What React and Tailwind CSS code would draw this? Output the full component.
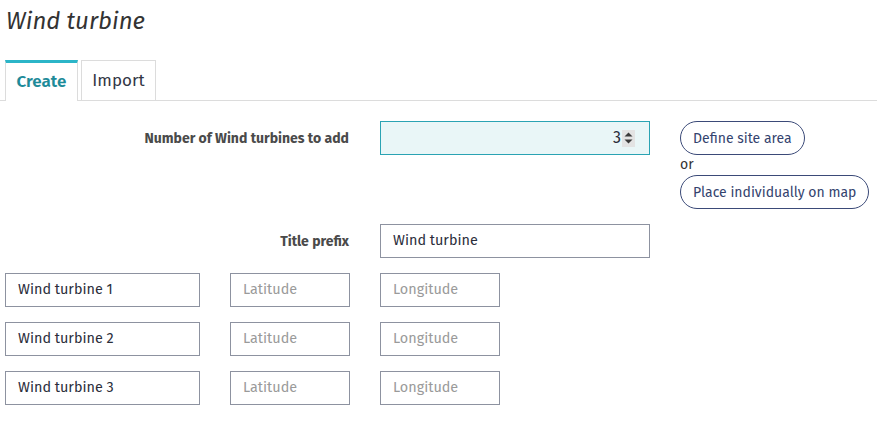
import React from 'react';

const FONT = { fontFamily: '"Fira Sans", "Open Sans", "Noto Sans", sans-serif' };

const Spinner = () => (
  <div className="flex flex-col items-center justify-center w-[13px] h-[17px] bg-[#e3e3e3] ml-[1px]">
    <svg width="9" height="5" viewBox="0 0 9 5"><path d="M0.5 4.5 L4.5 0.5 L8.5 4.5 Z" fill="#3a3a3a" /></svg>
    <svg width="9" height="5" viewBox="0 0 9 5" className="mt-[2px]"><path d="M0.5 0.5 L4.5 4.5 L8.5 0.5 Z" fill="#3a3a3a" /></svg>
  </div>
);

const Field = ({ value, placeholder, width }) => (
  <div className={`h-[34px] ${width} border border-[#8d92a0] flex items-center px-[12px] text-[14.4px]`}>
    {value ? <span className="text-[#2b2e3b]">{value}</span> : <span className="text-[#9a9a9a]">{placeholder}</span>}
  </div>
);

export default function App() {
  const turbines = ['Wind turbine 1', 'Wind turbine 2', 'Wind turbine 3'];
  return (
    <div className="w-[877px] h-[430px] bg-white overflow-hidden" style={FONT}>
      <h1 className="pl-[6px] pt-[6px] text-[24px] italic text-[#333] leading-[30px]">Wind turbine</h1>

      {/* Tabs */}
      <div className="mt-[24px] flex items-end border-b border-[#dcdcdc] pl-[5px] h-[41px]">
        <div className="w-[73px] h-[41px] border-t-[3px] border-t-[#2bb5c8] border-x border-x-[#dcdcdc] bg-white -mb-px flex items-center justify-center text-[17px] font-semibold text-[#1e8b99]">
          Create
        </div>
        <div className="ml-[3px] w-[75px] h-[40px] border border-[#dcdcdc] border-b-0 flex items-center justify-center text-[17px] text-[#333745]">
          Import
        </div>
      </div>

      {/* Number row */}
      <div className="mt-[20px] flex items-start">
        <label className="w-[349px] text-right text-[14px] font-bold text-[#4a4a4a] pt-[7px]">Number of Wind turbines to add</label>
        <div className="ml-[31px] w-[270px] h-[34px] bg-[#e9f6f7] border border-[#2aa3b3] flex items-center justify-end pr-[14px] text-[16px] text-[#2b2e3b]">
          3<Spinner />
        </div>
        <div className="ml-[30px] flex flex-col items-start">
          <button className="h-[34px] px-[12px] rounded-full border border-[#3b4a78] text-[14px] text-[#34436e]">Define site area</button>
          <span className="text-[14px] text-[#333] leading-[17px] mt-px">or</span>
          <button className="mt-[2px] h-[34px] px-[12px] rounded-full border border-[#3b4a78] text-[14px] text-[#34436e]">Place individually on map</button>
        </div>
      </div>

      {/* Title prefix */}
      <div className="mt-[15px] flex items-start">
        <label className="w-[349px] text-right text-[14px] font-bold text-[#4a4a4a] pt-[7px]">Title prefix</label>
        <div className="ml-[31px]">
          <Field value="Wind turbine" width="w-[270px]" />
        </div>
      </div>

      {/* Turbines */}
      <div className="mt-[15px] pl-[5px] flex flex-col gap-[15px]">
        {turbines.map((t) => (
          <div key={t} className="flex gap-[30px]">
            <Field value={t} width="w-[195px]" />
            <Field placeholder="Latitude" width="w-[120px]" />
            <Field placeholder="Longitude" width="w-[120px]" />
          </div>
        ))}
      </div>
    </div>
  );
}
